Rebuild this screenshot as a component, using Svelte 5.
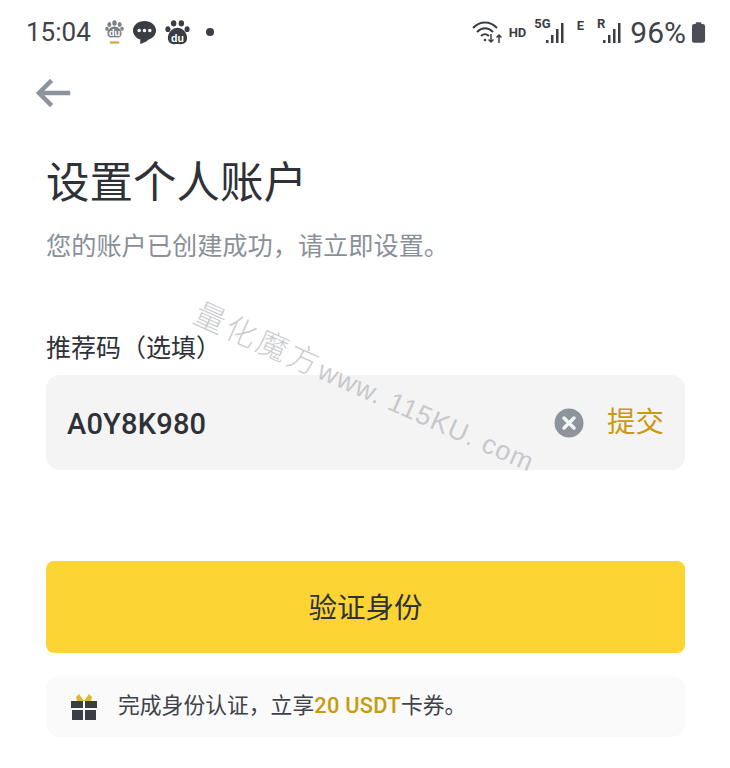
<script lang="ts">
  let code = $state('A0Y8K980');
</script>

<div class="page">
  <div class="status-bar">
    <div class="status-left">
      <span class="time">15:04</span>
      <svg viewBox="0 0 24 32" width="19" height="26">
        <g fill="#7d8087">
          <ellipse cx="12" cy="4.500" rx="2.800" ry="3.500" />
          <ellipse cx="5.500" cy="6.500" rx="2.500" ry="3.200" />
          <ellipse cx="18.500" cy="6.500" rx="2.500" ry="3.200" />
          <ellipse cx="2.500" cy="12" rx="2.200" ry="2.600" />
          <ellipse cx="21.500" cy="12" rx="2.200" ry="2.600" />
          <path d="M12 9c-5 0-9 4.500-9 9 0 4 3 5.500 5.500 5 2.500-.4 4.500-.4 7 0 2.500.5 5.500-1 5.500-5 0-4.500-4-9-9-9z" />
        </g>
        <text x="12" y="21" class="du small">du</text>
        <rect x="6" y="28" width="12" height="2.500" fill="#d99a2b" />
      </svg>
      <svg viewBox="0 0 26 26" width="25" height="25">
        <path d="M13 1C6.400 1 1 5.400 1 11c0 4.300 3.200 8 7.700 9.400L8.500 25c3-.8 6.500-2.500 8.500-4.500 4.800-1.300 8-5 8-9.500C25 5.400 19.600 1 13 1z" fill="#3a3d44" />
        <circle cx="7.500" cy="11" r="1.800" fill="#fff" />
        <circle cx="13" cy="11" r="1.800" fill="#fff" />
        <circle cx="18.500" cy="11" r="1.800" fill="#fff" />
      </svg>
      <svg viewBox="0 0 26 26" width="25" height="25">
        <g fill="#3a3d44">
          <ellipse cx="9" cy="3.500" rx="2.800" ry="3.300" />
          <ellipse cx="17" cy="3.500" rx="2.800" ry="3.300" />
          <ellipse cx="3" cy="9.500" rx="2.600" ry="3.100" />
          <ellipse cx="23" cy="9.500" rx="2.600" ry="3.100" />
          <path d="M13 8c-5 0-10 5-10 10.500 0 5 3.500 7 7 6.600 2-.3 4-.3 6 0 3.500.4 7-1.600 7-6.600C23 13 18 8 13 8z" />
        </g>
        <text x="13" y="22.500" class="du">du</text>
      </svg>
      <span class="dot"></span>
    </div>
    <div class="status-right">
      <svg viewBox="0 0 32 26" width="32" height="26" fill="none" stroke="#3a3d44" stroke-width="2">
        <path d="M1 9c7-7.500 17-7.500 24 0" />
        <path d="M5 13c5-5 11-5 16 0" />
        <path d="M9 17c3-2.700 5-2.700 8 0" />
        <circle cx="13" cy="21" r="1.300" fill="#3a3d44" stroke="none" />
        <path d="M19 15v8m-2.500-2.500L19 23l2.500-2.500M27 24v-8m-2.500 2.500L27 16l2.500 2.500" stroke-width="1.500" />
      </svg>
      <span class="net">HD</span>
      <div class="signal">
        <span class="net tag five">5G</span>
        <svg viewBox="0 0 20 24" width="20" height="24" fill="#3a3d44">
          <rect x="0" y="20" width="2.500" height="3" /><rect x="5" y="15" width="2.500" height="8" /><rect x="10" y="9" width="2.500" height="14" /><rect x="15" y="3" width="2.500" height="20" />
        </svg>
      </div>
      <span class="net tag e">E</span>
      <div class="signal">
        <span class="net tag r">R</span>
        <svg viewBox="0 0 20 24" width="20" height="24" fill="#3a3d44">
          <rect x="0" y="20" width="2.500" height="3" /><rect x="5" y="15" width="2.500" height="8" /><rect x="10" y="9" width="2.500" height="14" /><rect x="15" y="3" width="2.500" height="20" />
        </svg>
      </div>
      <span class="battery-text">96%</span>
      <svg viewBox="0 0 16 22" width="15" height="21" fill="#4a4d53">
        <rect x="5" y="0" width="6" height="3" rx="1" />
        <rect x="1" y="2" width="14" height="20" rx="2.500" />
      </svg>
    </div>
  </div>

  <div class="back-row">
    <svg viewBox="0 0 36 28" width="36" height="28" fill="none" stroke="#8c939d" stroke-width="4.500" stroke-linecap="square">
      <path d="M33 14H5M15 3L4 14l11 11" />
    </svg>
  </div>

  <main class="content">
    <h1>设置个人账户</h1>
    <p class="subtitle">您的账户已创建成功，请立即设置。</p>

    <div class="field-label">推荐码（选填）</div>
    <div class="input-box">
      <span class="code">{code}</span>
      <div class="input-actions">
        <svg viewBox="0 0 30 30" width="30" height="30">
          <circle cx="15" cy="15" r="14.500" fill="#8e949c" />
          <path d="M10 10l10 10M20 10L10 20" stroke="#f4f4f5" stroke-width="3.500" stroke-linecap="round" />
        </svg>
        <span class="submit">提交</span>
      </div>
    </div>

    <button class="primary">验证身份</button>

    <div class="notice">
      <svg viewBox="0 0 26 28" width="26" height="28">
        <path d="M13 8L8 1l-3 3 1 4zM13 8l5-7 3 3-1 4z" fill="#e0b92e" />
        <rect x="0" y="8" width="12" height="7" fill="#3a3d44" />
        <rect x="14" y="8" width="12" height="7" fill="#3a3d44" />
        <rect x="1" y="17" width="11" height="10" fill="#3a3d44" />
        <rect x="14" y="17" width="11" height="10" fill="#3a3d44" />
      </svg>
      <span class="notice-text">完成身份认证，立享<b>20 USDT</b>卡券。</span>
    </div>
  </main>

  <div class="watermark">量化魔方<span>www. 115KU. com</span></div>
</div>

<style>
  :global(body) {
    margin: 0;
    background: #fff;
  }

  .page {
    position: relative;
    width: 730px;
    height: 768px;
    overflow: hidden;
    background: #fff;
    color: #2e3138;
    font-family: Roboto, "Noto Sans CJK SC", sans-serif;
  }

  .status-bar {
    height: 64px;
    display: flex;
    align-items: center;
    justify-content: space-between;
    padding: 0 24px 0 26px;
    box-sizing: border-box;
  }

  .status-left,
  .status-right {
    display: flex;
    align-items: center;
  }

  .status-left {
    gap: 8px;
  }

  .time {
    font-size: 26px;
    color: #3f4248;
    margin-right: 6px;
  }

  .du {
    font: bold 11px "Liberation Sans", sans-serif;
    fill: #fff;
    text-anchor: middle;
  }

  .du.small {
    font-size: 12px;
  }

  .dot {
    width: 8px;
    height: 8px;
    border-radius: 50%;
    background: #3a3d44;
    margin-left: 8px;
  }

  .status-right {
    gap: 5px;
  }

  .net {
    font: bold 13px Roboto, sans-serif;
    color: #3a3d44;
  }

  .signal {
    display: flex;
    align-items: flex-start;
  }

  .tag {
    margin-top: -4px;
  }

  .tag.five {
    margin: -4px -5px 0 3px;
  }

  .tag.r {
    margin-right: -2px;
  }

  .tag.e {
    margin: -14px 8px 0 6px;
  }

  .battery-text {
    font-size: 30px;
    color: #3f4248;
    margin-left: 2px;
  }

  .back-row {
    height: 48px;
    padding: 0 0 0 35px;
    display: flex;
    align-items: center;
    margin-top: 5px;
  }

  .content {
    padding: 0 45px 0 46px;
  }

  h1 {
    margin: 41px 0 0;
    font-size: 43.500px;
    line-height: 52px;
    font-weight: 400;
    color: #2e3138;
  }

  .subtitle {
    margin: 19px 0 0;
    font-size: 25.200px;
    line-height: 36px;
    color: #8a9099;
  }

  .field-label {
    margin-top: 66px;
    font-size: 25px;
    line-height: 36px;
  }

  .input-box {
    margin-top: 8px;
    height: 95px;
    border-radius: 14px;
    background: #f4f4f5;
    display: flex;
    align-items: center;
    justify-content: space-between;
    padding: 0 21px;
  }

  .code {
    font-size: 29px;
    font-weight: 500;
    letter-spacing: 0.200px;
    color: #2e3138;
    padding-top: 2px;
  }

  .input-actions {
    display: flex;
    align-items: center;
    gap: 23px;
  }

  .input-actions svg {
    margin-left: -2px;
  }

  .submit {
    font-size: 28.500px;
    line-height: 36px;
    color: #c99a0c;
  }

  .primary {
    display: block;
    width: 100%;
    height: 92px;
    margin-top: 91px;
    border: none;
    border-radius: 8px;
    background: #fcd535;
    color: #2e3138;
    font: inherit;
    font-size: 28.500px;
    padding: 0 0 4px;
  }

  .notice {
    margin-top: 23px;
    height: 61px;
    border-radius: 14px;
    background: #fafafa;
    display: flex;
    align-items: center;
    gap: 21px;
    padding: 0 25px;
  }

  .notice-text {
    font-size: 21.800px;
    line-height: 30px;
    color: #3f4248;
    padding-bottom: 2px;
  }

  .notice-text b {
    font-weight: 500;
    color: #c99a0c;
    letter-spacing: 0.300px;
  }

  .watermark {
    position: absolute;
    left: 197px;
    top: 287px;
    font-family: "Noto Sans CJK SC", sans-serif;
    font-weight: 300;
    font-size: 31px;
    letter-spacing: 3px;
    white-space: nowrap;
    color: rgba(170, 170, 175, 0.6);
    transform: rotate(24deg);
    transform-origin: left center;
  }

  .watermark span {
    font-family: "Liberation Sans", sans-serif;
    font-size: 27px;
    letter-spacing: 1px;
  }
</style>
